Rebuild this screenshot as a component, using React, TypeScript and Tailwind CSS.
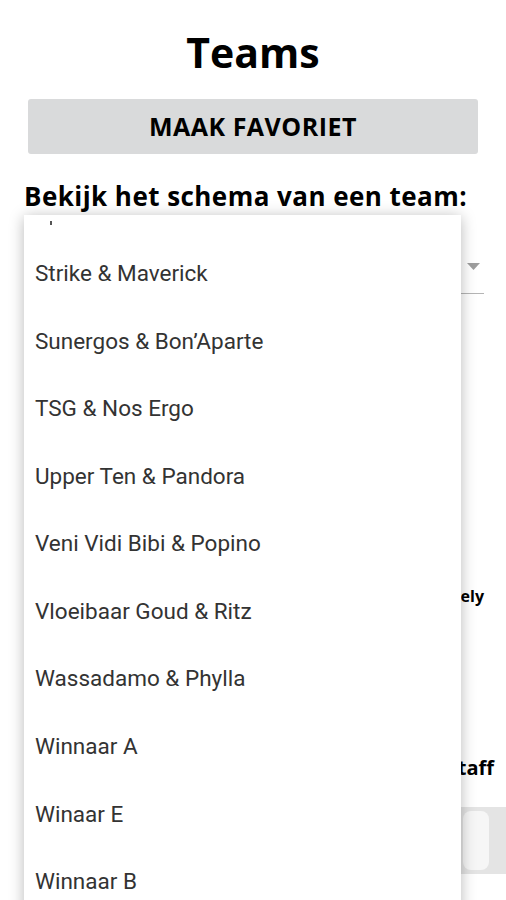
import React from "react";

const TEAMS = [
  "Strike & Maverick",
  "Sunergos & Bon’Aparte",
  "TSG & Nos Ergo",
  "Upper Ten & Pandora",
  "Veni Vidi Bibi & Popino",
  "Vloeibaar Goud & Ritz",
  "Wassadamo & Phylla",
  "Winnaar A",
  "Winaar E",
  "Winnaar B",
];

export default function App() {
  return (
    <div className="relative w-[506px] h-[900px] overflow-hidden bg-white text-black font-['Open_Sans',sans-serif]">
      {/* page underneath the open menu */}
      <div className="flex flex-col">
        <h1 className="mt-[26px] text-center text-[41px] font-bold leading-[52px]">Teams</h1>
        <div className="mx-[28px] mt-[21px] h-[55px] rounded-[3px] bg-[#d9dadb] flex items-center justify-center">
          <span className="text-[25px] font-bold tracking-[0.5px]">MAAK FAVORIET</span>
        </div>
        <p className="mt-[27px] px-[24px] text-[26px] font-bold leading-[31px] tracking-[0.45px] whitespace-nowrap">
          Bekijk het schema van een team:
        </p>
        <div className="ml-[24px] mr-[22px] mt-[35px] h-[47px] border-b border-[#b5b5b5] flex items-center justify-end pr-[4px]">
          <svg width="13" height="7" viewBox="0 0 13 7" className="mb-[8px]">
            <path d="M0 0h13L6.5 7z" fill="#9e9e9e" />
          </svg>
        </div>
        <div className="mt-[292px] pr-[22px] flex justify-end">
          <span className="text-[16px] font-bold leading-[20px]">Lovely</span>
        </div>
        <div className="mt-[150px] pr-[12px] flex justify-end">
          <span className="text-[20px] font-bold leading-[24px]">Staff</span>
        </div>
        <div className="mt-[27px] ml-[440px] h-[67px] bg-[#e4e4e4] flex pl-[23px] py-[4px] pr-[17px]">
          <div className="flex-1 rounded-[8px] bg-[#f6f6f6]" />
        </div>
      </div>

      {/* open dropdown menu */}
      <div className="absolute left-[24px] top-[215px] w-[437px] h-[720px] bg-white shadow-[0_2px_14px_rgba(0,0,0,0.28)] pt-[6px]">
        <div className="ml-[26px] h-[4px] w-[2px] bg-[#555]" />
        <ul className="mt-[15px] font-['Roboto',sans-serif]">
          {TEAMS.map((t) => (
            <li key={t} className="h-[67.6px] flex items-center pl-[11px] text-[22.5px] text-[#333]">
              {t}
            </li>
          ))}
        </ul>
      </div>
    </div>
  );
}
